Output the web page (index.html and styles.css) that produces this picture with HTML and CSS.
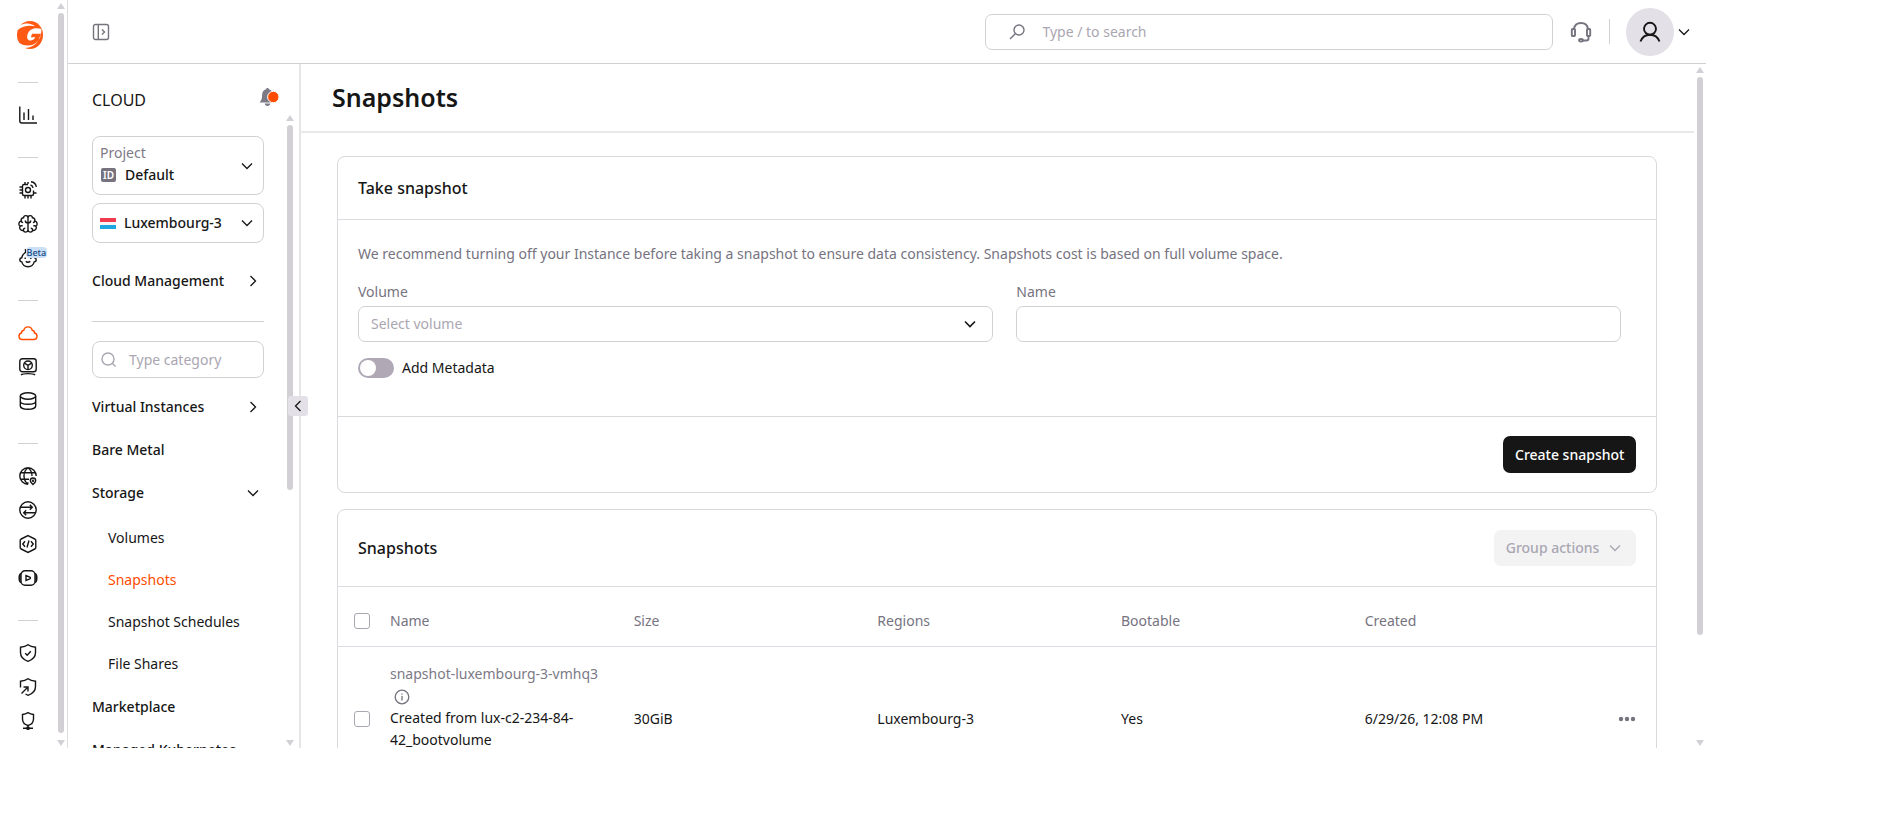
FILE: index.html
```html
<!DOCTYPE html>
<html lang="en">
<head>
  <meta charset="UTF-8">
  <meta name="viewport" content="width=device-width, initial-scale=1">
  <title>Snapshots</title>
  <link rel="stylesheet" href="styles.css">
</head>
<body>
  <div class="app">

    <!-- product rail -->
    <aside class="rail">
      <nav class="rail-nav" aria-label="Products">
        <a href="#" class="logo" aria-label="Home">
          <svg width="26" height="28" viewBox="0 0 26 28">
            <ellipse cx="13" cy="14" rx="13" ry="14" fill="#ff5913"/>
            <path fill="#fff" d="M3 4.500C8 1.500 14 2 18 5.200 15.500 4.600 11 4.300 6.500 5.800 4 6.600 2.500 7.500 1 9V4zM24.500 8c-7-2-13 .2-14.200 6.500-.7 3.700 1 5.200 3.700 5 2-.2 3.500-1.500 4.300-3.200h-4.500l1.300-3.600h9C23 19.500 18 24.500 11 24.500c-4.500 0-8-1.500-10-4 1 3 3 5 5.500 6.500C14 27.500 21 23 22.500 16.500L24 13z"/>
          </svg>
        </a>
        <div class="rail-group">
          <a href="#" aria-label="Reports"><svg class="icon" viewBox="0 0 18 18"><path d="M.8.500v14.500c0 1.200.8 2 2 2H18M5 14V6.500M9.500 14V3M14 14V9.500"/></svg></a>
        </div>
        <div class="rail-group">
          <a href="#" aria-label="Edge"><svg class="icon" viewBox="0 0 18 18"><path d="M9 3.500H5A1.500 1.500 0 0 0 3.500 5v8A1.500 1.500 0 0 0 5 14.500h8a1.500 1.500 0 0 0 1.500-1.500V9.500M6 15v2.500M9 15v2.500M12 15v2.500M3 6H.5M3 9H.5M3 12H.5M15 12h2.500M6 3V1M9 3V1M12 .8A6 6 0 0 1 17.300 6M11.500 4A3.500 3.500 0 0 1 14 6.800"/><circle cx="9" cy="9" r="2.500"/></svg></a>
          <a href="#" aria-label="AI"><svg class="icon" viewBox="0 0 18 18"><path d="M9 3a2.200 2.200 0 0 0-4.400-.3A2.600 2.600 0 0 0 2.200 6 3 3 0 0 0 1 11.300a2.800 2.800 0 0 0 3.300 4A2.400 2.400 0 0 0 9 15zM9 3a2.200 2.200 0 0 1 4.400-.3A2.600 2.600 0 0 1 15.800 6a3 3 0 0 1 1.200 5.300 2.800 2.800 0 0 1-3.300 4A2.400 2.400 0 0 1 9 15M2.200 6c.2 1 .9 1.600 1.900 1.600M15.800 6c-.2 1-.9 1.600-1.900 1.600M9 8C7.500 8 6.300 7 6.300 5.500M9 8c1.500 0 2.700-1 2.700-2.500M4.300 15.300c0-1.300.7-2.200 2-2.200M13.700 15.300c0-1.300-.7-2.200-2-2.200M1 11.300c.8-.6 1.800-.8 2.700-.4M17 11.300c-.8-.6-1.800-.8-2.700-.4"/></svg></a>
          <a href="#" aria-label="Agents" class="with-badge"><svg class="icon" viewBox="0 0 18 18"><path d="M6 .3c1.200 1.500 1 2.800-.5 4C3.800 5.500 3 7 2.700 8.800 1.500 8.900.8 9.700.8 10.800s.8 2 2 2.100a6.400 6.400 0 0 0 12.400 0c1.200-.1 2-1 2-2.100s-.7-1.900-1.900-2"/><path d="M6.800 12.300c1 1.300 3.400 1.300 4.400 0M6.200 8.500v1.500M11.800 8.500v1.500"/></svg><span class="badge">Beta</span></a>
        </div>
        <div class="rail-group">
          <a href="#" aria-label="Cloud" class="active"><svg class="icon" viewBox="0 0 18 18"><path d="M3.200 15.500h11.600a3.300 3.300 0 0 0 .7-6.500 2.700 2.700 0 0 0-2.300-2.700 4.300 4.300 0 0 0-8.400 0A2.700 2.700 0 0 0 2.500 9a3.300 3.300 0 0 0 .7 6.500z"/></svg></a>
          <a href="#" aria-label="Inference"><svg class="icon" viewBox="0 0 18 18"><rect x=".8" y=".8" width="16.400" height="13" rx="2.500"/><circle cx="9" cy="7.300" r="4.300"/><path d="M9 7.300v4M9 7.300 5.500 5.200M9 7.300l3.500-2.100M2 17c2-1.800 12-1.800 14 0"/></svg></a>
          <a href="#" aria-label="Databases"><svg class="icon" viewBox="0 0 18 18"><ellipse cx="9" cy="4" rx="7.700" ry="3.200"/><path d="M1.300 4v10c0 1.800 3.400 3.200 7.700 3.200s7.700-1.400 7.700-3.200V4M1.300 9.300c0 1.700 3.400 3 7.700 3s7.700-1.300 7.700-3"/></svg></a>
        </div>
        <div class="rail-group">
          <a href="#" aria-label="DNS"><svg class="icon" viewBox="0 0 18 18"><path d="M9 17.200A8.200 8.200 0 1 1 17.200 9M9 17.200C6 15 5 12 5 9s1-6 4-8.200C12 3 13 6 13 9M1.500 5.800h15M1.500 12.200H10M8.800 17.200v-2M14 17.500c-1.700-1.500-2.700-2.600-2.700-3.800a2.700 2.700 0 0 1 5.400 0c0 1.200-1 2.300-2.700 3.800z"/><circle cx="14" cy="13.700" r=".5"/></svg></a>
          <a href="#" aria-label="CDN"><svg class="icon" viewBox="0 0 18 18"><circle cx="9" cy="9" r="8.200"/><path d="M2 6.300h11M10.800 3.800l2.500 2.500-2.500 2.500M16 11.800H5M7.200 9.300l-2.500 2.500 2.500 2.500"/></svg></a>
          <a href="#" aria-label="FastEdge"><svg class="icon" viewBox="0 0 18 18"><path d="M9 .6 15.800 4q1 .5 1 1.500v7q0 1-1 1.500L9 17.400 2.200 14q-1-.5-1-1.500v-7q0-1 1-1.500zM6 6.200 3.800 9 6 11.800M12 6.200 14.200 9 12 11.800M10 5.500 8 12.500"/></svg></a>
          <a href="#" aria-label="Streaming"><svg class="icon" viewBox="0 0 18 18"><rect x="2" y="1.800" width="14" height="14.400" rx="4"/><path d="M2 4.500C-.5 5.500-.5 12.500 2 13.500M16 4.500c2.500 1 2.500 8 0 9M1 5v8M17 5v8M7 6.500v5l3.800-1.700q1.400-.8 0-1.600z"/></svg></a>
        </div>
        <div class="rail-group">
          <a href="#" aria-label="WAAP"><svg class="icon" viewBox="0 0 18 18"><path d="M9 .7C11 2.300 13.500 3 16.500 3.200V8.500c0 4.500-3 7.300-7.500 8.800-4.500-1.500-7.500-4.300-7.500-8.800V3.200C4.500 3 7 2.300 9 .7zM6.200 9.200l2 2 3.600-4"/></svg></a>
          <a href="#" aria-label="DDoS protection"><svg class="icon" viewBox="0 0 18 18"><path d="M1.500 9.500V3.200C4.500 3 7 2.300 9 .7 11 2.300 13.500 3 16.500 3.200V8.500c0 4.500-3 7.300-7.500 8.800L6.500 16M2.500 15.500l6-6M4.500 9H9v4.500"/></svg></a>
          <a href="#" aria-label="IP security"><svg class="icon" viewBox="0 0 18 18"><path d="M9 .7c1.700 1 3.500 1.600 5.500 1.800v4.500c0 3.200-2 5.500-5.500 6.500-3.500-1-5.500-3.300-5.500-6.500V2.500C5.500 2.300 7.300 1.700 9 .7zM9 13.500v2M4 16.300h10"/><circle cx="9" cy="16.200" r="1.200"/></svg></a>
        </div>
      </nav>
      <div class="scrollbar rail-scroll"><i class="up"></i><span class="track"><b></b></span><i class="down"></i></div>
    </aside>

    <div class="workspace">
      <header class="topbar">
        <button class="plain" aria-label="Toggle menu">
          <svg class="icon grey" viewBox="0 0 18 18"><rect x="1.500" y="1.500" width="15" height="15" rx="2"/><path d="M6.300 1.500v15M10 6.500 12.500 9 10 11.500"/></svg>
        </button>
        <label class="global-search">
          <svg class="icon grey" viewBox="0 0 18 18"><circle cx="11" cy="7" r="5"/><path d="M7.500 10.500 2 16"/></svg>
          <input type="search" placeholder="Type / to search" aria-label="Search">
        </label>
        <button class="plain support" aria-label="Support">
          <svg width="22" height="22" viewBox="0 0 22 22" fill="none" stroke="#76737f" stroke-width="1.900"><path d="M4 8C4.500 4 7 2 11 2s6.500 2 7 6M18.500 14.500v3q0 2-2 2H13"/><rect x="1.800" y="8" width="3.200" height="7" rx=".8"/><rect x="17" y="8" width="3.200" height="7" rx=".8"/><ellipse cx="11" cy="19.300" rx="1.900" ry="1.300"/></svg>
        </button>
        <span class="vline"></span>
        <button class="plain account" aria-label="Account">
          <span class="avatar"><svg width="22" height="22" viewBox="0 0 22 22" fill="none" stroke="#161616" stroke-width="1.900"><circle cx="11" cy="7.800" r="6"/><path d="M1.500 20.500C3.200 16 6.500 13.800 11 13.800s7.800 2.200 9.500 6.700"/></svg></span>
          <svg class="chevron" viewBox="0 0 12 12"><path d="M1 3.500 6 8.500l5-5"/></svg>
        </button>
      </header>

      <div class="columns">
        <aside class="sidebar">
          <div class="sidebar-head">
            <h2>CLOUD</h2>
            <button class="plain bell" aria-label="Notifications">
              <svg width="20" height="20" viewBox="0 0 20 20"><path fill="#7d7986" d="M8.500 1c.8 0 1.300.5 1.400 1.200 2.700.7 4 2.800 4 5.600 0 3.700.6 5.700 2.600 7.700H.5c2-2 2.600-4 2.600-7.700 0-2.800 1.300-4.900 4-5.600C7.200 1.500 7.700 1 8.500 1zM5.800 16.500h5.400c0 1.500-1.200 2.500-2.700 2.500s-2.700-1-2.700-2.500z"/><circle cx="14.300" cy="10" r="5.700" fill="#ff4c00" stroke="#fff"/></svg>
            </button>
          </div>
          <div class="sidebar-body">
            <div class="sidebar-content">
              <button class="picker project">
                <span class="picker-text">
                  <span class="muted">Project</span>
                  <span class="picker-value"><span class="id-tag">ID</span>Default</span>
                </span>
                <svg class="chevron" viewBox="0 0 12 12"><path d="M1 3.500 6 8.500l5-5"/></svg>
              </button>
              <button class="picker region">
                <span class="flag"></span>
                <span class="picker-text">Luxembourg-3</span>
                <svg class="chevron" viewBox="0 0 12 12"><path d="M1 3.500 6 8.500l5-5"/></svg>
              </button>
              <a href="#" class="menu-item management">Cloud Management <svg class="chevron" viewBox="0 0 12 12"><path d="M3.500 1 8.500 6l-5 5"/></svg></a>
              <hr>
              <label class="category-search">
                <svg class="icon" viewBox="0 0 18 18"><circle cx="8" cy="8" r="6"/><path d="M12.500 12.500 15.500 15.500"/></svg>
                <input type="search" placeholder="Type category" aria-label="Type category">
              </label>
              <nav class="menu">
                <a href="#" class="menu-item">Virtual Instances <svg class="chevron" viewBox="0 0 12 12"><path d="M3.500 1 8.500 6l-5 5"/></svg></a>
                <a href="#" class="menu-item">Bare Metal</a>
                <a href="#" class="menu-item">Storage <svg class="chevron" viewBox="0 0 12 12"><path d="M1 3.500 6 8.500l5-5"/></svg></a>
                <div class="submenu">
                  <a href="#">Volumes</a>
                  <a href="#" class="current">Snapshots</a>
                  <a href="#">Snapshot Schedules</a>
                  <a href="#">File Shares</a>
                </div>
                <a href="#" class="menu-item">Marketplace</a>
                <a href="#" class="menu-item">Managed Kubernetes</a>
              </nav>
            </div>
            <div class="scrollbar side-scroll"><i class="up"></i><span class="track"><b></b></span><i class="down"></i></div>
          </div>
          <button class="collapse" aria-label="Collapse sidebar"><svg class="chevron" viewBox="0 0 12 12"><path d="M8.500 1 3.500 6l5 5"/></svg></button>
        </aside>

        <div class="content">
          <main>
            <div class="page-head"><h1>Snapshots</h1></div>

            <form class="card">
              <h3 class="card-head">Take snapshot</h3>
              <div class="card-body">
                <p class="hint">We recommend turning off your Instance before taking a snapshot to ensure data consistency. Snapshots cost is based on full volume space.</p>
                <div class="fields">
                  <div class="field">
                    <label for="volume">Volume</label>
                    <div class="select-wrap">
                      <select id="volume"><option>Select volume</option></select>
                      <svg class="chevron" viewBox="0 0 12 12"><path d="M1 3.500 6 8.500l5-5"/></svg>
                    </div>
                  </div>
                  <div class="field">
                    <label for="name">Name</label>
                    <input type="text" id="name">
                  </div>
                </div>
                <label class="switch"><input type="checkbox"><span>Add Metadata</span></label>
              </div>
              <div class="card-foot">
                <button type="button" class="btn btn-primary">Create snapshot</button>
              </div>
            </form>

            <section class="card list">
              <div class="card-head list-head">
                <h3>Snapshots</h3>
                <button class="btn btn-group" disabled>Group actions <svg class="chevron" viewBox="0 0 12 12"><path d="M1 3.500 6 8.500l5-5"/></svg></button>
              </div>
              <table>
                <thead>
                  <tr>
                    <th class="col-check"><input type="checkbox" class="check" aria-label="Select all"></th>
                    <th>Name</th>
                    <th>Size</th>
                    <th>Regions</th>
                    <th>Bootable</th>
                    <th>Created</th>
                    <th class="col-actions"></th>
                  </tr>
                </thead>
                <tbody>
                  <tr>
                    <td><input type="checkbox" class="check" aria-label="Select snapshot"></td>
                    <td class="name-cell">
                      <span class="muted">snapshot-luxembourg-3-vmhq3</span>
                      <svg class="info" viewBox="0 0 16 16"><circle cx="8" cy="8" r="6.800"/><path d="M8 7v4.500M8 4.500v1.200"/></svg>
                      <div>Created from lux-c2-234-84-42_bootvolume</div>
                    </td>
                    <td>30GiB</td>
                    <td>Luxembourg-3</td>
                    <td>Yes</td>
                    <td>6/29/26, 12:08 PM</td>
                    <td class="row-actions"><button class="plain" aria-label="Actions"><svg width="18" height="6" viewBox="0 0 18 6" fill="#76737f"><circle cx="3" cy="3" r="2.200"/><circle cx="9" cy="3" r="2.200"/><circle cx="15" cy="3" r="2.200"/></svg></button></td>
                  </tr>
                </tbody>
              </table>
            </section>
          </main>
          <div class="scrollbar main-scroll"><i class="up"></i><span class="track"><b></b></span><i class="down"></i></div>
        </div>
      </div>
    </div>
  </div>
</body>
</html>
```
FILE: styles.css
```css
* {
  box-sizing: border-box;
}
body {
  margin: 0;
  background: #fff;
  color: #161616;
  font-family: "Noto Sans", "Open Sans", sans-serif;
  font-size: 14px;
  line-height: 22px;
}
a {
  color: inherit;
  text-decoration: none;
}
h1, h2, h3, p {
  margin: 0;
}
button, input, select {
  font: inherit;
  color: inherit;
}
input::placeholder {
  color: #aaa6b2;
  opacity: 1;
}
input:focus, select:focus {
  outline: 1px solid #76737f;
}
.app {
  display: flex;
  width: 90vw;
  height: 90vh;
  overflow: hidden;
}
.icon {
  width: 18px;
  height: 18px;
  flex: none;
  fill: none;
  stroke: currentColor;
  stroke-width: 1.4;
  overflow: visible;
}
.grey {
  color: #76737f;
}
.muted {
  color: #7d7986;
}
.chevron {
  width: 12px;
  height: 12px;
  flex: none;
  fill: none;
  stroke: currentColor;
  stroke-width: 1.3;
}
.plain {
  display: flex;
  align-items: center;
  padding: 0;
  border: 0;
  background: none;
  cursor: pointer;
}

/* scrollbars */
.scrollbar {
  flex: none;
  display: flex;
  flex-direction: column;
  align-items: center;
  width: 12px;
  padding: 3px 0 2px;
}
.scrollbar i {
  border: 4px solid transparent;
}
.scrollbar .up {
  border-top: 0;
  border-bottom: 6px solid #d2d0d5;
}
.scrollbar .down {
  border-bottom: 0;
  border-top: 6px solid #d2d0d5;
}
.track {
  flex: 1;
  width: 6px;
  margin: 4px 0 7px;
}
.track b {
  display: block;
  height: 100%;
  border-radius: 3px;
  background: #d2d0d5;
}
.side-scroll .track b {
  height: 60%;
}
.main-scroll .track b {
  height: 85%;
}

/* rail */
.rail {
  flex: none;
  display: flex;
  width: 68px;
  border-right: 1px solid #dfdde2;
}
.rail-nav {
  flex: 1;
  display: flex;
  flex-direction: column;
  align-items: center;
}
.logo {
  flex: none;
  height: 82px;
  padding: 21px 0 0 5px;
}
.rail-group {
  flex: none;
  padding: 15px 0 25px;
  border-top: 1px solid #d2d0d5;
}
.rail-group a {
  display: flex;
  align-items: center;
  justify-content: center;
  width: 20px;
  height: 34px;
}
.rail-group .active {
  color: #ff4c00;
}
.with-badge {
  position: relative;
}
.badge {
  position: absolute;
  left: 8px;
  top: 6px;
  padding: 0 1px;
  border-radius: 4px;
  background: #cbe0f8;
  color: #14487f;
  font-size: 9px;
  font-weight: 500;
  line-height: 11px;
}

/* top bar */
.workspace {
  flex: 1;
  min-width: 0;
  display: flex;
  flex-direction: column;
}
.topbar {
  flex: none;
  display: flex;
  align-items: center;
  height: 64px;
  padding: 0 16px 0 24px;
  border-bottom: 1px solid #d2d0d5;
}
.global-search {
  display: flex;
  align-items: center;
  gap: 16px;
  width: 568px;
  height: 36px;
  margin-left: auto;
  padding: 0 22px;
  border: 1px solid #d2d0d5;
  border-radius: 7px;
}
.global-search input, .category-search input {
  flex: 1;
  min-width: 0;
  padding: 0;
  border: 0;
  outline: 0;
  background: none;
}
.support {
  margin-left: 17px;
}
.vline {
  width: 1px;
  height: 25px;
  margin: 0 16px 0 17px;
  background: #d2d0d5;
}
.account {
  gap: 4px;
}
.avatar {
  display: flex;
  align-items: center;
  justify-content: center;
  width: 48px;
  height: 48px;
  border-radius: 50%;
  background: #e3e1e7;
}

/* sidebar */
.columns {
  flex: 1;
  min-height: 0;
  display: flex;
}
.sidebar {
  position: relative;
  flex: none;
  display: flex;
  flex-direction: column;
  width: 233px;
  border-right: 2px solid #e6e5e8;
}
.sidebar-head {
  display: flex;
  align-items: flex-end;
  justify-content: space-between;
  height: 48px;
  padding: 0 20px 1px 24px;
}
.sidebar-head h2 {
  font-size: 16px;
  font-weight: 400;
}
.bell {
  padding-bottom: 4px;
}
.sidebar-body {
  flex: 1;
  min-height: 0;
  display: flex;
  overflow: hidden;
}
.sidebar-content {
  width: 216px;
  padding: 24px 20px 0 24px;
}
.picker {
  display: flex;
  align-items: center;
  width: 100%;
  padding: 0 10px 0 7px;
  border: 1px solid #d2d0d5;
  border-radius: 8px;
  background: #fff;
  text-align: left;
}
.picker-text {
  flex: 1;
  font-weight: 500;
}
.picker-text .muted {
  display: block;
  font-weight: 400;
}
.project {
  height: 59px;
}
.project .picker-text {
  padding-bottom: 4px;
}
.region {
  height: 40px;
  gap: 8px;
  margin-top: 8px;
}
.picker-value {
  display: flex;
  align-items: center;
  gap: 9px;
}
.id-tag {
  width: 15px;
  height: 14px;
  margin-left: 1px;
  border-radius: 2px;
  background: #76737f;
  color: #fff;
  font-size: 10px;
  font-weight: 600;
  line-height: 14px;
  text-align: center;
}
.flag {
  width: 16px;
  height: 11px;
  background: linear-gradient(#ee3c4e 33%, #f6f6f6 33% 67%, #1da7e0 67%);
}
.menu-item {
  display: flex;
  align-items: center;
  justify-content: space-between;
  height: 43px;
  padding-right: 5px;
  font-weight: 500;
}
.management {
  margin: 16px 0 19px;
}
.sidebar hr {
  margin: 0 0 19px;
  border: 0;
  border-top: 1px solid #d2d0d5;
}
.category-search {
  display: flex;
  align-items: center;
  gap: 11px;
  height: 37px;
  padding: 0 7px;
  border: 1px solid #d2d0d5;
  border-radius: 8px;
}
.category-search .icon {
  color: #aaa6b2;
}
.menu {
  padding-top: 7px;
}
.submenu {
  padding: 3px 0 0 16px;
}
.submenu a {
  display: flex;
  align-items: center;
  height: 42px;
}
.submenu .current {
  color: #ff4c00;
}
.collapse {
  position: absolute;
  right: -9px;
  top: 332px;
  display: flex;
  align-items: center;
  justify-content: center;
  width: 20px;
  height: 20px;
  padding: 0;
  border: 0;
  border-radius: 3px;
  background: #e3e1e7;
}

/* page */
.content {
  flex: 1;
  min-width: 0;
  display: flex;
}
main {
  flex: 1;
  min-width: 0;
  overflow: hidden;
}
.page-head {
  padding: 17px 31px 18px;
  border-bottom: 2px solid #e9e9ea;
}
h1 {
  font-size: 25px;
  font-weight: 600;
  line-height: 32px;
}
h3 {
  font-size: 16px;
  font-weight: 500;
}
.card {
  margin: 23px 37px 0 36px;
  border: 1px solid #d9d9dd;
  border-radius: 8px;
}
.card + .card {
  margin-top: 16px;
}
.card-head {
  padding: 20px;
  border-bottom: 1px solid #dcdce0;
}
.card-body {
  padding: 23px 20px 37px;
}
.hint {
  margin-bottom: 16px;
  color: #76737f;
}
.fields {
  display: grid;
  grid-template-columns: 21fr 20fr;
  gap: 23px;
  padding-right: 15px;
  margin-bottom: 15px;
}
.field label {
  display: block;
  margin-bottom: 3px;
  color: #76737f;
}
.select-wrap {
  position: relative;
}
.field select, .field input {
  display: block;
  width: 100%;
  height: 36px;
  padding: 0 12px;
  border: 1px solid #d2d0d5;
  border-radius: 7px;
  background: #fff;
}
.field select {
  appearance: none;
  color: #aaa6b2;
}
.select-wrap .chevron {
  position: absolute;
  right: 17px;
  top: 12px;
  stroke-width: 1.6;
}
.switch {
  display: flex;
  align-items: center;
  gap: 8px;
}
.switch input {
  appearance: none;
  width: 36px;
  height: 20px;
  margin: 0;
  padding: 2px;
  border-radius: 10px;
  background: #b0a9b5;
}
.switch input::before {
  content: "";
  display: block;
  width: 16px;
  height: 16px;
  border-radius: 50%;
  background: #fff;
}
.switch input:checked {
  background: #ff4c00;
}
.switch input:checked::before {
  margin-left: auto;
}
.card-foot {
  display: flex;
  justify-content: flex-end;
  padding: 19px 20px;
  border-top: 1px solid #d9d9dd;
}
.btn {
  display: flex;
  align-items: center;
  height: 36px;
  padding: 0 12px;
  border: 0;
  border-radius: 7px;
  font-weight: 500;
}
.btn-primary {
  height: 37px;
  background: #161616;
  color: #fff;
}
.btn-group {
  gap: 10px;
  padding-right: 15px;
  background: #f3f3f4;
  color: #aaa6b2;
}
.list-head {
  display: flex;
  align-items: center;
  justify-content: space-between;
}

table {
  width: 100%;
  table-layout: fixed;
  border-collapse: collapse;
}
th, td {
  padding: 0 24px 0 0;
  font-weight: 400;
  text-align: left;
}
thead th {
  height: 59px;
  padding-top: 10px;
  border-bottom: 1px solid #dcdce3;
  color: #76737f;
}
.col-check {
  width: 52px;
}
.col-actions {
  width: 48px;
}
tbody td {
  height: 146px;
}
.col-check, tbody td:first-child {
  padding-left: 16px;
  padding-right: 0;
}
.check {
  appearance: none;
  display: block;
  width: 16px;
  height: 16px;
  margin: 0;
  border: 1px solid #aaa6b2;
  border-radius: 3px;
  background: #fff;
}
.check:checked {
  background: #161616;
}
tbody .name-cell {
  padding-top: 16px;
  vertical-align: top;
}
.info {
  width: 16px;
  height: 16px;
  margin-left: 4px;
  vertical-align: middle;
  fill: none;
  stroke: #76737f;
  stroke-width: 1.3;
}
tbody .row-actions {
  padding: 0 20px 0 0;
}
.row-actions .plain {
  margin-left: auto;
}
```
